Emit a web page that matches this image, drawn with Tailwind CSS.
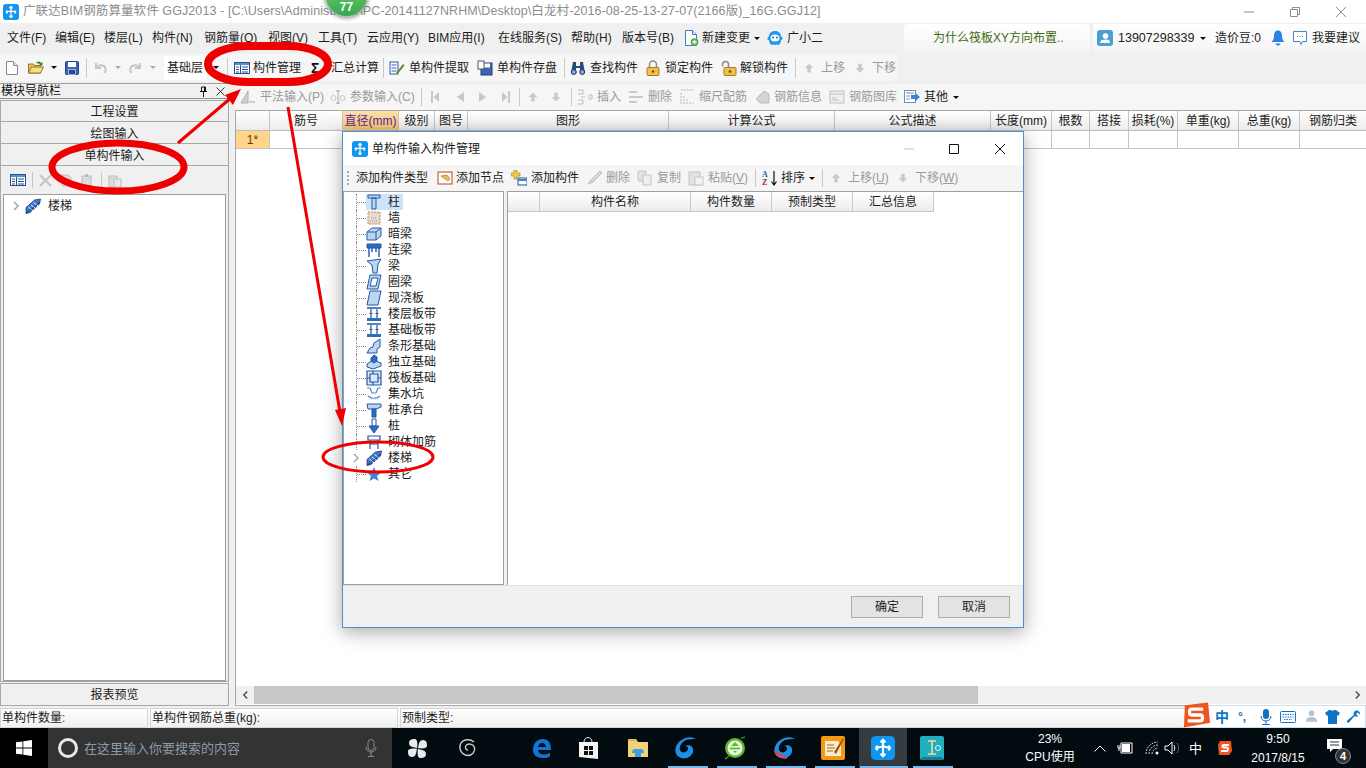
<!DOCTYPE html>
<html lang="zh-CN">
<head>
<meta charset="UTF-8">
<title>广联达BIM钢筋算量软件</title>
<script src="https://cdn.jsdelivr.net/npm/@tailwindcss/browser@4"></script>
</head>
<body class="bg-white">
<svg class="hidden">
  <symbol id="logo" viewBox="0 0 16 16"><rect width="16" height="16" rx="3" fill="#0f96f0"/><path d="M8 2.500v11M3 8c2 0 3-1 5-1s3 1 5 1M6.300 4.200 8 2.500l1.700 1.700M6.300 11.800 8 13.500l1.700-1.700M3 8l1.500-1.500M3 8l1.500 1.500M13 8l-1.500-1.500M13 8l-1.500 1.500" fill="none" stroke="#fff" stroke-width="1.300"/></symbol>
  <symbol id="up" viewBox="0 0 16 16"><path d="M8 3l5 5h-3v5H6V8H3z" fill="#c9c9c9"/></symbol>
  <symbol id="down" viewBox="0 0 16 16"><path d="M8 13l5-5h-3V3H6v5H3z" fill="#c9c9c9"/></symbol>
  <symbol id="table" viewBox="0 0 16 16"><rect x=".5" y="2.500" width="15" height="11" fill="#fff" stroke="#23508f"/><path d="M1 3h14v2H1z" fill="#5d8fc9"/><path d="M6.500 5v8M2 7h3M2 9.500h3M2 12h3M8 7h6M8 9.500h6M8 12h6" stroke="#23508f"/></symbol>
  <symbol id="chev" viewBox="0 0 8 10"><path d="M2 1l4 4-4 4" fill="none" stroke="#a6a6a6" stroke-width="1.500"/></symbol>
  <symbol id="stair" viewBox="0 0 16 16"><path d="M1 9.500 9.500 2 15.500 1 14.500 6 5 14.500 1 15.500z" fill="#3f78c8" stroke="#173f86" stroke-width=".8"/><path d="M3.500 9 8 13M6 7l4.500 3.500M8.500 4.500 13 8" stroke="#fff" stroke-width="1"/><path d="M1 15.500 15 4" stroke="#173f86" stroke-width="1"/></symbol>
</svg>

<div class="relative w-[1366px] h-[768px] overflow-hidden flex flex-col bg-[#f0f0f0] text-[12px] leading-none text-[#1c1c1c] [font-family:'Liberation_Sans','Noto_Sans_CJK_SC',sans-serif]">

  <!-- title bar -->
  <div class="h-[23px] bg-white flex items-center shrink-0">
    <svg class="w-4 h-4 ml-[3px] shrink-0"><use href="#logo"/></svg>
    <span class="ml-[4px] w-[800px] whitespace-nowrap text-[#8c8c8c] text-[12.5px] tracking-[0.09px]">广联达BIM钢筋算量软件 GGJ2013 - [C:\Users\Administrator\PC-20141127NRHM\Desktop\白龙村-2016-08-25-13-27-07(2166版)_16G.GGJ12]</span>
    <svg class="ml-auto w-[10px] h-[10px]" viewBox="0 0 10 10"><path d="M0 5h10" stroke="#8c8c8c"/></svg>
    <svg class="ml-[36px] w-[10px] h-[10px]" viewBox="0 0 10 10"><path d="M.5 2.500h7v7h-7zM2.500 2.500v-2h7v7h-2" fill="none" stroke="#8c8c8c"/></svg>
    <svg class="ml-[36px] mr-[20px] w-[10px] h-[10px]" viewBox="0 0 10 10"><path d="M0 0l10 10M10 0 0 10" stroke="#8c8c8c"/></svg>
  </div>

  <!-- menu bar -->
  <div class="h-[30px] flex items-center shrink-0 whitespace-nowrap">
    <span class="ml-[7px] w-[48px]">文件(F)</span>
    <span class="w-[49px]">编辑(E)</span>
    <span class="w-[48px]">楼层(L)</span>
    <span class="w-[52px]">构件(N)</span>
    <span class="w-[64px]">钢筋量(Q)</span>
    <span class="w-[50px]">视图(V)</span>
    <span class="w-[49px]">工具(T)</span>
    <span class="w-[61px]">云应用(Y)</span>
    <span class="w-[70px]">BIM应用(I)</span>
    <span class="w-[73px]">在线服务(S)</span>
    <span class="w-[51px]">帮助(H)</span>
    <span class="w-[61px]">版本号(B)</span>
    <svg class="w-4 h-4 shrink-0" viewBox="0 0 16 16"><path d="M2.500.5h7l4 4v11h-11z" fill="#fff" stroke="#3d7fc4"/><path d="M9.500.5v4h4" fill="#cfe3f7" stroke="#3d7fc4"/><circle cx="11.500" cy="12" r="3.800" fill="#52a83a"/><path d="M11.500 9.800v4.400M9.300 12h4.400" stroke="#fff" stroke-width="1.400"/></svg>
    <span class="ml-[3px] w-[48px]">新建变更</span>
    <span class="ml-[4px] w-0 h-0 border-x-[3px] border-x-transparent border-t-[3px] border-t-[#111]"></span>
    <svg class="ml-[7px] w-[16px] h-[16px] shrink-0" viewBox="0 0 16 16"><path d="M8 1c4 0 6 2.500 6 5.500 1 .3 1.500 1 1.500 2s-.7 1.600-1.500 1.700c-.5 2.800-1.500 4.800-3 4.800-.8 0-1-.8-1.500-.8s-.8.800-1.500.8-1-.8-1.500-.8-.7.800-1.500.8c-1.500 0-2.500-2-3-4.800C.7 10.100.5 9.500.5 8.500s.5-1.700 1.500-2C2 3.500 4 1 8 1z" fill="#1c9be8"/><ellipse cx="8" cy="8" rx="4.500" ry="3.500" fill="#fff"/><circle cx="6" cy="7.500" r="1" fill="#1c6fb0"/><circle cx="10" cy="7.500" r="1" fill="#1c6fb0"/></svg>
    <span class="ml-[4px] w-[117px]">广小二</span>
    <div class="h-[28px] w-[186px] rounded-t-sm bg-gradient-to-b from-white to-[#f4f4f4] flex items-center shrink-0">
      <span class="ml-[29px] text-[#3f6a10]">为什么筏板XY方向布置..</span>
    </div>
    <div class="ml-[3px] h-[28px] w-[273px] bg-gradient-to-b from-white to-[#f4f4f4] flex items-center shrink-0">
      <svg class="ml-[4px] w-4 h-4 shrink-0" viewBox="0 0 16 16"><rect width="16" height="16" rx="3" fill="#4a9ed6"/><circle cx="8.500" cy="6" r="2.800" fill="#fff"/><path d="M3 13c0-2.500 2-3.500 5.500-3.500S13 10.500 13 13z" fill="#fff"/></svg>
      <span class="ml-[5px] w-[76px] text-[12.500px] text-[#222]">13907298339</span>
      <span class="ml-[6px] w-0 h-0 border-x-[3px] border-x-transparent border-t-[3px] border-t-[#111]"></span>
      <span class="ml-[9px] w-[46px] text-[#222]">造价豆:0</span>
      <svg class="ml-[10px] w-[14px] h-4 shrink-0" viewBox="0 0 14 16"><path d="M7 .5C4 .5 3 3 3 6c0 3-1 4.500-2.500 6h13C12 10.500 11 9 11 6c0-3-1-5.500-4-5.500z" fill="#2b83e8"/><path d="M4.500 13.500h5C9.300 15 8 15.500 7 15.500s-2.300-.5-2.500-2z" fill="#2b83e8"/></svg>
      <svg class="ml-[7px] w-4 h-4 shrink-0" viewBox="0 0 16 16"><path d="M1.500 1.500h13v10h-4l-1.500 3-1-3h-6.500z" fill="#fff" stroke="#3b87d6"/><path d="M5 6.500h1M7.500 6.500h1M10 6.500h1" stroke="#3b87d6"/></svg>
      <span class="ml-[4px]">我要建议</span>
    </div>
  </div>

  <!-- main toolbar -->
  <div class="h-[30px] shrink-0 flex items-start whitespace-nowrap">
    <div class="mt-[1px] w-[897px] h-[27px] bg-[#f6f6f6] rounded-sm flex items-center">
      <svg class="ml-[6px] w-3 h-[14px] shrink-0" viewBox="0 0 12 14"><path d="M.5.5h7l4 4v9H.5z" fill="#fff" stroke="#7f8b9a"/><path d="M7.500.5v4h4" fill="#dfe6ef" stroke="#7f8b9a"/></svg>
      <svg class="ml-[10px] w-4 h-4 shrink-0" viewBox="0 0 16 16"><path d="M.5 4h5l1 1.500h6V13H.5z" fill="#e8c15a" stroke="#9a7420"/><path d="M.5 13l3-6h12l-3 6z" fill="#f6dc85" stroke="#9a7420"/><path d="M8 3c1-2 4-2 5 0l1.500-1v3.500H11l1-1c-1-1-2.500-1-4-1.500z" fill="#3c8a2e"/></svg>
      <span class="ml-[7px] w-0 h-0 border-x-[3px] border-x-transparent border-t-[3px] border-t-[#111]"></span>
      <svg class="ml-[8px] w-[14px] h-[14px] shrink-0" viewBox="0 0 14 14"><rect x=".5" y=".5" width="13" height="13" rx="1" fill="#3a66b5" stroke="#1e3f80"/><rect x="3" y="1" width="8" height="5" fill="#fff"/><rect x="3.500" y="8.500" width="7" height="5" fill="#27498e" stroke="#cfd9ec" stroke-width=".7"/></svg>
      <span class="ml-[7px] w-px h-[20px] bg-[#c8c8c8]"></span>
      <svg class="ml-[8px] w-[12px] h-[12px] shrink-0" viewBox="0 0 12 12"><path d="M1 1v5h5M1.500 6C3 2.500 9 2 10.500 6.500c.5 2 0 3-1 4.500" fill="none" stroke="#c6c6c6" stroke-width="2"/></svg>
      <span class="ml-[8px] w-0 h-0 border-x-[3px] border-x-transparent border-t-[3px] border-t-[#a8a8a8]"></span>
      <svg class="ml-[8px] w-[12px] h-[12px] shrink-0" viewBox="0 0 12 12"><path d="M11 1v5H6M10.500 6C9 2.500 3 2 1.500 6.500c-.5 2 0 3 1 4.500" fill="none" stroke="#c6c6c6" stroke-width="2"/></svg>
      <span class="ml-[9px] w-0 h-0 border-x-[3px] border-x-transparent border-t-[3px] border-t-[#a8a8a8]"></span>
      <div class="ml-[8px] w-[42px] h-[24px] bg-white flex items-center pl-[3px]">基础层</div>
      <span class="ml-[7px] w-0 h-0 border-x-[3px] border-x-transparent border-t-[3px] border-t-[#111]"></span>
      <span class="ml-[8px] w-px h-[20px] bg-[#c8c8c8]"></span>
      <svg class="ml-[6px] w-4 h-4 shrink-0"><use href="#table"/></svg>
      <span class="ml-[3px] w-[48px]">构件管理</span>
      <span class="ml-[10px] w-[10px] font-bold text-[14px] text-[#111]">Σ</span>
      <span class="ml-[10px] w-[46px]">汇总计算</span>
      <span class="ml-[6px] w-px h-[20px] bg-[#c8c8c8]"></span>
      <svg class="ml-[5px] w-4 h-4 shrink-0" viewBox="0 0 16 16"><rect x="1" y="2" width="8" height="12" fill="#fff" stroke="#2d5ca8"/><path d="M2.500 5h5M2.500 8h5M2.500 11h5" stroke="#2d5ca8"/><path d="M7 13l7-9 1.500 1.500-7 8.500z" fill="#5b8a2f"/></svg>
      <span class="ml-[4px] w-[60px]">单构件提取</span>
      <svg class="ml-[8px] w-4 h-4 shrink-0" viewBox="0 0 16 16"><rect x="4" y="3" width="11" height="12" fill="#3a66b5" stroke="#1e3f80"/><rect x="6" y="3.500" width="7" height="4" fill="#fff"/><rect x="1" y="1" width="6" height="8" fill="#fff" stroke="#555"/></svg>
      <span class="ml-[4px] w-[60px]">单构件存盘</span>
      <span class="ml-[7px] w-px h-[20px] bg-[#c8c8c8]"></span>
      <svg class="ml-[5px] w-4 h-4 shrink-0" viewBox="0 0 16 16"><path d="M3 2h3v4h4V2h3l2 11H10V8H6v5H1z" fill="#27497f"/><circle cx="3.800" cy="12" r="2.500" fill="#7fa6d8" stroke="#1d3763"/><circle cx="12.200" cy="12" r="2.500" fill="#7fa6d8" stroke="#1d3763"/></svg>
      <span class="ml-[4px] w-[48px]">查找构件</span>
      <svg class="ml-[8px] w-[14px] h-4 shrink-0" viewBox="0 0 14 16"><path d="M3.500 8V4.500a3.500 3.500 0 0 1 7 0V8" fill="none" stroke="#8d8d8d" stroke-width="1.500"/><rect x="1" y="7.500" width="12" height="8" rx="1" fill="#efc04e" stroke="#a67c1d"/><circle cx="7" cy="11.500" r="1.300" fill="#6a4c08"/></svg>
      <span class="ml-[5px] w-[48px]">锁定构件</span>
      <svg class="ml-[8px] w-4 h-4 shrink-0" viewBox="0 0 16 16"><path d="M1.500 6.500V4.500a3 3 0 0 1 6 0V8" fill="none" stroke="#8d8d8d" stroke-width="1.500"/><rect x="3" y="7.500" width="12" height="8" rx="1" fill="#efc04e" stroke="#a67c1d"/><circle cx="9" cy="11.500" r="1.300" fill="#6a4c08"/></svg>
      <span class="ml-[3px] w-[48px]">解锁构件</span>
      <span class="ml-[7px] w-px h-[20px] bg-[#c8c8c8]"></span>
      <svg class="ml-[6px] w-[14px] h-[14px] shrink-0"><use href="#up"/></svg>
      <span class="ml-[5px] w-[24px] text-[#9a9a9a]">上移</span>
      <svg class="ml-[8px] w-[14px] h-[14px] shrink-0"><use href="#down"/></svg>
      <span class="ml-[5px] w-[24px] text-[#9a9a9a]">下移</span>
    </div>
  </div>

  <!-- work area -->
  <div class="h-[623px] shrink-0 flex">
    <!-- module nav -->
    <div class="w-[229px] shrink-0 flex flex-col border-t border-[#a0a0a0]">
      <div class="h-[15px] shrink-0 flex items-center border-b border-[#8c8c8c] whitespace-nowrap">
        <span class="ml-[1px] text-[#111]">模块导航栏</span>
        <svg class="ml-auto w-[9px] h-[11px]" viewBox="0 0 9 11"><path d="M2.500 1h4v4.500h-4zM1 5.500h7M4.500 5.500V11M5.500 1v4.500" fill="none" stroke="#111"/></svg>
        <svg class="ml-[8px] mr-[4px] w-[9px] h-[9px]" viewBox="0 0 9 9"><path d="M.5.5l8 8M8.500.5l-8 8" stroke="#333"/></svg>
      </div>
      <div class="mt-[1px] h-[22px] pt-[2px] shrink-0 flex items-center justify-center bg-[#f0f0f0] border border-[#a8a8a8]">工程设置</div>
      <div class="h-[22px] pt-[2px] shrink-0 flex items-center justify-center bg-[#f0f0f0] border border-t-0 border-[#a8a8a8]">绘图输入</div>
      <div class="h-[22px] pt-[2px] shrink-0 flex items-center justify-center bg-[#f0f0f0] border border-t-0 border-[#a8a8a8]">单构件输入</div>
      <div class="flex-1 flex flex-col border border-t-0 border-[#a8a8a8] px-[2px]">
        <div class="h-[28px] shrink-0 flex items-center">
          <svg class="ml-[7px] w-4 h-4 shrink-0"><use href="#table"/></svg>
          <span class="ml-[6px] w-px h-[16px] bg-[#c8c8c8]"></span>
          <svg class="ml-[6px] w-[13px] h-[13px]" viewBox="0 0 13 13"><path d="M1 1l11 11M12 1 1 12" stroke="#c4c4c4" stroke-width="2"/></svg>
          <svg class="ml-[8px] w-[13px] h-[13px]" viewBox="0 0 13 13"><path d="M2 1h6l3 3v8H2z" fill="#dcdcdc" stroke="#c0c0c0"/></svg>
          <svg class="ml-[7px] w-[15px] h-[15px]" viewBox="0 0 15 15"><path d="M2 3h9v11H2z" fill="#dcdcdc" stroke="#bcbcbc"/><path d="M5 1h3v3H5z" fill="#bcbcbc"/></svg>
          <span class="ml-[6px] w-px h-[16px] bg-[#c8c8c8]"></span>
          <svg class="ml-[5px] w-[15px] h-[15px]" viewBox="0 0 15 15"><path d="M2 3h8v11H2z" fill="#dcdcdc" stroke="#bcbcbc"/><path d="M7 6h7v8H7z" fill="#e8e8e8" stroke="#bcbcbc"/></svg>
        </div>
        <div class="flex-1 bg-white border border-[#9c9c9c] pt-[1px]">
          <div class="h-[16px] mt-[2px] flex items-center">
            <svg class="ml-[8px] w-[8px] h-[10px]"><use href="#chev"/></svg>
            <svg class="ml-[5px] w-4 h-4 shrink-0"><use href="#stair"/></svg>
            <span class="ml-[7px]">楼梯</span>
          </div>
        </div>
      </div>
      <div class="mt-[1px] h-[23px] shrink-0 flex items-center justify-center bg-[#f0f0f0] border border-[#a8a8a8]">报表预览</div>
    </div>

    <!-- detail grid -->
    <div class="ml-[6px] flex-1 flex flex-col min-w-0">
      <div class="mt-[1px] h-[26px] shrink-0 flex items-center bg-[#f6f6f6] whitespace-nowrap text-[#9a9a9a]">
        <svg class="ml-[5px] w-4 h-4 shrink-0" viewBox="0 0 16 16"><path d="M1 14L8 2v12z" fill="#d0d0d0" stroke="#b0b0b0"/><path d="M9 14h6v-2H9z" fill="#d0d0d0"/></svg>
        <span class="ml-[4px] w-[63px]">平法输入(P)</span>
        <svg class="ml-[7px] w-4 h-4 shrink-0" viewBox="0 0 16 16"><path d="M8 1v14M6 2h4M6 14h4" stroke="#aaa"/><circle cx="3.500" cy="9" r="2.500" fill="none" stroke="#c4c4c4"/><circle cx="12.500" cy="9" r="2.500" fill="none" stroke="#c4c4c4"/></svg>
        <span class="ml-[4px] w-[63px]">参数输入(C)</span>
        <span class="ml-[8px] w-px h-[18px] bg-[#c8c8c8]"></span>
        <svg class="ml-[8px] w-[10px] h-[12px]" viewBox="0 0 10 12"><path d="M1 0h2v12H1zM9 1v10L3.500 6z" fill="#c8c8c8"/></svg>
        <svg class="ml-[15px] w-[10px] h-[12px]" viewBox="0 0 10 12"><path d="M9 1v10L2 6z" fill="#c8c8c8"/></svg>
        <svg class="ml-[13px] w-[10px] h-[12px]" viewBox="0 0 10 12"><path d="M1 1v10l7-5z" fill="#c8c8c8"/></svg>
        <svg class="ml-[13px] w-[10px] h-[12px]" viewBox="0 0 10 12"><path d="M7 0h2v12H7zM1 1v10l5.500-5z" fill="#c8c8c8"/></svg>
        <span class="ml-[8px] w-px h-[18px] bg-[#c8c8c8]"></span>
        <svg class="ml-[6px] w-[14px] h-[14px] shrink-0"><use href="#up"/></svg>
        <svg class="ml-[9px] w-[14px] h-[14px] shrink-0"><use href="#down"/></svg>
        <span class="ml-[8px] w-px h-[18px] bg-[#c8c8c8]"></span>
        <svg class="ml-[5px] w-4 h-4 shrink-0" viewBox="0 0 16 16"><path d="M1 1h5v4H1M1 11h5v4H1M4 8h4M12 6h3v4h-3z" fill="none" stroke="#bdbdbd"/></svg>
        <span class="ml-[4px] w-[24px]">插入</span>
        <svg class="ml-[7px] w-4 h-4 shrink-0" viewBox="0 0 16 16"><path d="M1 3h8M1 8h10M1 13h8" stroke="#bdbdbd" stroke-width="1.500"/><path d="M11 8h4" stroke="#9a9a9a"/></svg>
        <span class="ml-[4px] w-[24px]">删除</span>
        <svg class="ml-[8px] w-[15px] h-4 shrink-0" viewBox="0 0 15 16"><path d="M1 15V3M4 15V6M7 15V9M10 15v-3M13 15v-1M1 1h13" stroke="#b8b8b8" stroke-dasharray="2 1"/></svg>
        <span class="ml-[4px] w-[48px]">缩尺配筋</span>
        <svg class="ml-[8px] w-4 h-4 shrink-0" viewBox="0 0 16 16"><path d="M1 10L9 2l5 3v9H5z" fill="#d4d4d4" stroke="#bcbcbc"/></svg>
        <span class="ml-[3px] w-[48px]">钢筋信息</span>
        <svg class="ml-[7px] w-4 h-4 shrink-0" viewBox="0 0 16 16"><rect x="1" y="2" width="14" height="12" fill="#efefef" stroke="#c0c0c0"/><path d="M1 5h14M3 9h4M3 11h7" stroke="#c0c0c0"/></svg>
        <span class="ml-[4px] w-[48px]">钢筋图库</span>
        <svg class="ml-[7px] w-4 h-4 shrink-0" viewBox="0 0 16 16"><rect x=".5" y="1.500" width="11" height="12" fill="#fff" stroke="#7b8ea8"/><path d="M2 4h8M2 7h4M2 10h4" stroke="#7b8ea8"/><path d="M7 6h4V3.500l5 4.500-5 4.500V10H7z" fill="#3d83d6"/></svg>
        <span class="ml-[4px] w-[24px] text-[#1c1c1c]">其他</span>
        <span class="ml-[5px] w-0 h-0 border-x-[3px] border-x-transparent border-t-[3px] border-t-[#111]"></span>
      </div>
      <div class="flex-1 flex flex-col bg-white border-t border-l border-b border-[#a8a8a8] min-h-0">
        <div class="h-[20px] shrink-0 flex bg-gradient-to-b from-white to-[#ececec] border-b border-[#bdbdbd] whitespace-nowrap">
          <div class="w-[34px] border-r border-[#c4c4c4]"></div>
          <div class="w-[73px] border-r border-[#c4c4c4] flex items-center justify-center">筋号</div>
          <div class="w-[56px] border-r border-[#c4c4c4] flex items-center justify-center bg-gradient-to-b from-[#fde0a8] to-[#f6c574] text-[#5e1f9a]">直径(mm)</div>
          <div class="w-[36px] border-r border-[#c4c4c4] flex items-center justify-center">级别</div>
          <div class="w-[33px] border-r border-[#c4c4c4] flex items-center justify-center">图号</div>
          <div class="w-[201px] border-r border-[#c4c4c4] flex items-center justify-center">图形</div>
          <div class="w-[166px] border-r border-[#c4c4c4] flex items-center justify-center">计算公式</div>
          <div class="w-[156px] border-r border-[#c4c4c4] flex items-center justify-center">公式描述</div>
          <div class="w-[61px] border-r border-[#c4c4c4] flex items-center justify-center">长度(mm)</div>
          <div class="w-[38px] border-r border-[#c4c4c4] flex items-center justify-center">根数</div>
          <div class="w-[39px] border-r border-[#c4c4c4] flex items-center justify-center">搭接</div>
          <div class="w-[49px] border-r border-[#c4c4c4] flex items-center justify-center">损耗(%)</div>
          <div class="w-[61px] border-r border-[#c4c4c4] flex items-center justify-center">单重(kg)</div>
          <div class="w-[61px] border-r border-[#c4c4c4] flex items-center justify-center">总重(kg)</div>
          <div class="flex-1 flex items-center justify-center">钢筋归类</div>
        </div>
        <div class="h-[18px] shrink-0 flex border-b border-[#c4c4c4]">
          <div class="w-[34px] bg-[#ffd58c] border-r border-[#c4c4c4] flex items-center justify-center text-[#6b3a00]">1*</div>
          <div class="w-[73px] border-r border-[#c4c4c4]"></div>
          <div class="w-[56px] border-r border-[#c4c4c4]"></div>
          <div class="w-[36px] border-r border-[#c4c4c4]"></div>
          <div class="w-[33px] border-r border-[#c4c4c4]"></div>
          <div class="w-[201px] border-r border-[#c4c4c4]"></div>
          <div class="w-[166px] border-r border-[#c4c4c4]"></div>
          <div class="w-[156px] border-r border-[#c4c4c4]"></div>
          <div class="w-[61px] border-r border-[#c4c4c4]"></div>
          <div class="w-[38px] border-r border-[#c4c4c4]"></div>
          <div class="w-[39px] border-r border-[#c4c4c4]"></div>
          <div class="w-[49px] border-r border-[#c4c4c4]"></div>
          <div class="w-[61px] border-r border-[#c4c4c4]"></div>
          <div class="w-[61px] border-r border-[#c4c4c4]"></div>
        </div>
        <div class="flex-1"></div>
        <div class="h-[18px] mb-[1px] shrink-0 flex items-stretch bg-[#f0f0f0]">
          <div class="w-[18px] flex items-center justify-center"><svg class="w-[7px] h-[10px] rotate-180" viewBox="0 0 8 10"><path d="M2 1l4 4-4 4" fill="none" stroke="#444" stroke-width="1.500"/></svg></div>
          <div class="w-[724px] bg-[#c8c8c8]"></div>
          <div class="flex-1"></div>
          <div class="w-[18px] flex items-center justify-center"><svg class="w-[7px] h-[10px]" viewBox="0 0 8 10"><path d="M2 1l4 4-4 4" fill="none" stroke="#444" stroke-width="1.500"/></svg></div>
        </div>
      </div>
    </div>
  </div>

  <!-- status bar -->
  <div class="mt-[2px] h-[20px] shrink-0 flex bg-gradient-to-b from-white to-[#f0f0f0] whitespace-nowrap">
    <div class="w-[148px] border border-[#d4d4d4] flex items-center pl-[1px]">单构件数量:</div>
    <div class="ml-[2px] w-[248px] border border-[#d4d4d4] flex items-center pl-[1px]">单构件钢筋总重(kg):</div>
    <div class="ml-[2px] flex-1 border border-[#d4d4d4] flex items-center pl-[1px]">预制类型:</div>
  </div>

  <!-- taskbar -->
  <div class="h-[40px] shrink-0 flex items-center bg-[#020b10] text-white">
    <div class="w-[48px] h-full bg-black flex items-center justify-center">
      <svg class="w-4 h-4" viewBox="0 0 16 16"><path d="M0 2.300l6.500-.9v6.200H0zM7.300 1.300 16 0v7.600H7.300zM0 8.400h6.500v6.200L0 13.700zM7.300 8.400H16V16l-8.700-1.200z" fill="#fff"/></svg>
    </div>
    <div class="w-[344px] h-full bg-[#333333] flex items-center">
      <span class="ml-[10px] w-[20px] h-[20px] rounded-full border-[3px] border-[#e8e8e8]"></span>
      <span class="ml-[6px] text-[13px] text-[#8d99a6] whitespace-nowrap">在这里输入你要搜索的内容</span>
      <svg class="ml-auto mr-[15px] w-[12px] h-[18px]" viewBox="0 0 12 18"><rect x="3" y=".5" width="6" height="11" rx="3" fill="none" stroke="#8a8a8a"/><path d="M1 8c0 3 2 5 5 5s5-2 5-5M6 13v4M3 17.500h6" fill="none" stroke="#8a8a8a"/></svg>
    </div>
    <svg class="ml-[15px] w-[21px] h-[21px]" viewBox="0 0 21 21"><path d="M10 10C6 9 2 9 2 5s4-4 6-4 3 4 2 9zM11 10c1-4 1-8 5-8s4 4 4 6-4 3-9 2zM11 11c4 1 8 1 8 5s-4 4-6 4-3-4-2-9zM10 11c-1 4-1 8-5 8s-4-4-4-6 4-3 9-2z" fill="#e8eaeb"/></svg>
    <svg class="ml-[30px] w-[20px] h-[20px]" viewBox="0 0 20 20"><path d="M16 4C12 .5 5 1 2.500 6c-2 5 1 11 7 11.500 5 0 8-4 7-8-1-3-5-4.500-8-2.500-2 2-1 5 1.500 5" fill="none" stroke="#c9c9c9" stroke-width="1.400"/></svg>
    <svg class="ml-[54px] w-[20px] h-[21px]" viewBox="0 0 20 21"><path d="M1 12C1 5 5 1 11 1c5 0 8 4 8 10v1H6c.5 3 3 4.500 6 4.500 2 0 4-.5 6-2v4c-2 1-4 1.500-7 1.500C5 20 1 17 1 12zm5-3h8c0-2-1.500-4-4-4-2 0-3.500 2-4 4z" fill="#0a78d6"/></svg>
    <svg class="ml-[26px] w-[21px] h-[24px]" viewBox="0 0 21 24"><path d="M6 6c0-6 8-6 8 0" fill="none" stroke="#e6e6e6"/><path d="M1 6l19 0 0 17-19-2z" fill="#f4f4f4"/><path d="M6 10h4v4H6zM11 10h4v4h-4zM6 15h4v4H6zM11 15h4v4h-4z" fill="#111"/></svg>
    <svg class="ml-[28px] w-[22px] h-[20px]" viewBox="0 0 22 20"><path d="M1 1h8l2 3h10v15H1z" fill="#f0d27a"/><path d="M1 1h8l1 2H1z" fill="#e4b94a"/><path d="M5 15c0-2 1-4 3-4h6c2 0 3 2 3 4h-3v4H8v-4z" fill="#3aa0e0"/></svg>
    <svg class="ml-[24px] w-[24px] h-[24px]" viewBox="0 0 24 24"><path d="M23 3c-5-3-11-2-16 2C1 10 1 18 6 21c5 3 12 1 14-5 1-5-3-8-8-6 3 0 4 3 2 5-2 2-6 2-7-1-1-4 2-8 6-10 3-1 7-1 10-1z" fill="#1d8fe6"/></svg>
    <svg class="ml-[26px] w-[24px] h-[26px]" viewBox="0 0 24 26"><circle cx="12" cy="13" r="10" fill="#5cbc2c"/><circle cx="12" cy="13" r="7.500" fill="#e8f6df"/><path d="M7 13.500h10" stroke="#5cbc2c" stroke-width="1.800"/><path d="M12 7l-4 4h8z" fill="#5cbc2c"/><path d="M14 16h-4l2 2z" fill="#5cbc2c"/><path d="M2 24c2-1 3-2 4-3M18 3c2 0 3-1 4-1" stroke="#3a8f1a" stroke-width="1.500"/></svg>
    <svg class="ml-[25px] w-[24px] h-[24px]" viewBox="0 0 24 24"><path d="M23 3c-5-3-11-2-16 2C1 10 1 18 6 21c5 3 12 1 14-5 1-5-3-8-8-6 3 0 4 3 2 5-2 2-6 2-7-1-1-4 2-8 6-10 3-1 7-1 10-1z" fill="#1d8fe6"/><path d="M2 14l14 8-3 1-9-4z" fill="#e4434f"/></svg>
    <svg class="ml-[25px] w-[24px] h-[24px]" viewBox="0 0 24 24"><rect width="24" height="24" rx="2" fill="#f39a12"/><path d="M4 5h13l3 4v11H4z" fill="#f9eecb"/><path d="M6 9h7M6 12h8M6 15h6" stroke="#9a6a1a"/><path d="M13 16L22 2l1 1-8 15z" fill="#b4461c"/></svg>
    <div class="ml-[14px] w-[48px] h-full bg-[#353b3e] flex items-center justify-center">
      <svg class="w-6 h-6"><use href="#logo"/></svg>
    </div>
    <svg class="ml-[13px] w-[24px] h-[24px]" viewBox="0 0 24 24"><rect width="24" height="24" rx="2" fill="#23aebf"/><path d="M8 5h8M8 18h8M12 5v13" stroke="#efdca0" stroke-width="1.600"/><circle cx="18" cy="12" r="2.500" fill="none" stroke="#e7f5f7"/><path d="M2 21h20v3H2z" fill="#168090"/></svg>

    <div class="ml-[71px] w-[70px] flex flex-col items-center gap-[6px] text-[12px] whitespace-nowrap"><span>23%</span><span>CPU使用</span></div>
    <svg class="ml-[9px] w-[12px] h-[7px]" viewBox="0 0 12 7"><path d="M.5 6.500 6 1l5.500 5.500" fill="none" stroke="#fff"/></svg>
    <svg class="ml-[11px] w-[16px] h-[12px]" viewBox="0 0 16 12"><path d="M4 1h11v10H4z" fill="none" stroke="#fff"/><rect x="5" y="2" width="8" height="8" fill="#fff"/><path d="M1 3v3h2V3M2 6v3" stroke="#fff"/></svg>
    <svg class="ml-[12px] w-[14px] h-[14px]" viewBox="0 0 14 14"><path d="M1 13c0-6 5-12 12-12M4 13c0-5 4-9 9-9M7 13c0-3 3-6 6-6" fill="none" stroke="#cfcfcf" stroke-dasharray="2 1"/><circle cx="12" cy="12" r="1.500" fill="#fff"/></svg>
    <svg class="ml-[5px] w-[16px] h-[14px]" viewBox="0 0 16 14"><path d="M1 5h3l4-4v12L4 9H1z" fill="none" stroke="#fff"/><path d="M10 4c1 2 1 4 0 6" fill="none" stroke="#fff"/><path d="M13 2c2 3 2 7 0 10" fill="none" stroke="#666"/></svg>
    <span class="ml-[9px] w-[14px] text-[13px]">中</span>
    <svg class="ml-[14px] w-[16px] h-[16px]" viewBox="0 0 16 16"><path d="M3 1h11l1 10-3 4H2L1 5z" fill="#f0561d"/><path d="M12 5H6.500C5 5 5 7.500 6.500 7.500h3c2 0 2 3.500 0 3.500H4" fill="none" stroke="#fff" stroke-width="1.800"/></svg>
    <div class="ml-[14px] w-[62px] flex flex-col items-center gap-[7px] text-[12px] whitespace-nowrap"><span>9:50</span><span>2017/8/15</span></div>
    <div class="ml-[18px] relative w-[15px] h-[14px] -mt-[4px]">
      <svg class="w-[15px] h-[14px]" viewBox="0 0 15 14"><path d="M0 0h15v10H6l-3 3v-3H0z" fill="#fff"/><path d="M3 3h9M3 6h9" stroke="#333"/></svg>
      <span class="absolute left-[8px] top-[9px] w-[16px] h-[16px] rounded-full bg-[#333] border border-[#888] flex items-center justify-center text-[11px] font-bold">4</span>
    </div>
  </div>

  <!-- running task underlines -->
  <div class="absolute left-[668px] bottom-0 w-[40px] h-[2px] bg-[#76b9ed]"></div>
  <div class="absolute left-[717px] bottom-0 w-[40px] h-[2px] bg-[#76b9ed]"></div>
  <div class="absolute left-[766px] bottom-0 w-[40px] h-[2px] bg-[#76b9ed]"></div>
  <div class="absolute left-[815px] bottom-0 w-[40px] h-[2px] bg-[#76b9ed]"></div>
  <div class="absolute left-[860px] bottom-0 w-[48px] h-[2px] bg-[#76b9ed]"></div>
  <div class="absolute left-[913px] bottom-0 w-[40px] h-[2px] bg-[#76b9ed]"></div>

  <!-- component manager dialog -->
  <div class="absolute left-[342px] top-[131px] w-[682px] h-[497px] flex flex-col bg-white border border-[#4a90d9] shadow-[0_4px_18px_rgba(0,0,0,0.35)]">
    <div class="h-[33px] shrink-0 flex items-center">
      <svg class="ml-[9px] w-4 h-4 shrink-0"><use href="#logo"/></svg>
      <span class="ml-[4px]">单构件输入构件管理</span>
      <svg class="ml-auto w-[10px] h-[10px]" viewBox="0 0 10 10"><path d="M0 5h10" stroke="#c4c4c4"/></svg>
      <svg class="ml-[35px] w-[10px] h-[10px]" viewBox="0 0 10 10"><path d="M.5.5h9v9h-9z" fill="none" stroke="#111"/></svg>
      <svg class="ml-[36px] mr-[18px] w-[10px] h-[10px]" viewBox="0 0 10 10"><path d="M0 0l10 10M10 0 0 10" stroke="#111"/></svg>
    </div>
    <div class="h-[26px] shrink-0 flex items-center bg-[#f5f5f5] whitespace-nowrap">
      <span class="ml-[4px] w-[2px] h-[14px] border-l-2 border-dotted border-[#aaa]"></span>
      <span class="ml-[7px] w-[72px]">添加构件类型</span>
      <svg class="ml-[9px] w-4 h-4 shrink-0" viewBox="0 0 16 16"><rect x="1" y="2" width="14" height="12" fill="#fff" stroke="#c8401c"/><path d="M4 6l7 5 2-2-3-4z" fill="#e4bf62" stroke="#a07a20" stroke-width=".7"/></svg>
      <span class="ml-[3px] w-[48px]">添加节点</span>
      <svg class="ml-[7px] w-4 h-4 shrink-0" viewBox="0 0 16 16"><path d="M3 0h3v3h3v3H6v3H3V6H0V3h3z" fill="#eccb4d" stroke="#a58317" stroke-width=".6"/><rect x="7" y="8" width="9" height="7" fill="#fff" stroke="#23508f"/><path d="M7 9h9v2H7z" fill="#4e82c0"/></svg>
      <span class="ml-[4px] w-[48px]">添加构件</span>
      <svg class="ml-[8px] w-4 h-4 shrink-0" viewBox="0 0 16 16"><path d="M1 14l5-2 9-9-2-2-9 9z" fill="#d8d8d8" stroke="#bcbcbc"/></svg>
      <span class="ml-[3px] w-[24px] text-[#9a9a9a]">删除</span>
      <svg class="ml-[7px] w-4 h-4 shrink-0" viewBox="0 0 16 16"><path d="M1 1h8v10H1z" fill="#e2e2e2" stroke="#c4c4c4"/><path d="M6 5h8v10H6z" fill="#efefef" stroke="#c4c4c4"/></svg>
      <span class="ml-[4px] w-[24px] text-[#9a9a9a]">复制</span>
      <svg class="ml-[7px] w-4 h-4 shrink-0" viewBox="0 0 16 16"><rect x="1" y="2" width="11" height="13" fill="#e2e2e2" stroke="#c4c4c4"/><rect x="7" y="7" width="8" height="8" fill="#f2f2f2" stroke="#c4c4c4"/></svg>
      <span class="ml-[4px] w-[41px] text-[#9a9a9a]">粘贴(<span class="underline">V</span>)</span>
      <span class="ml-[6px] w-px h-[18px] bg-[#c8c8c8]"></span>
      <svg class="ml-[5px] w-[17px] h-4 shrink-0" viewBox="0 0 17 16"><text x="1" y="7" font-size="8" font-weight="700" font-family="Liberation Serif" fill="#2c5aa8">A</text><text x="1" y="15" font-size="8" font-weight="700" font-family="Liberation Serif" fill="#a02c2c">Z</text><path d="M13 1v13M10.500 11.500 13 15l2.500-3.500" fill="none" stroke="#111" stroke-width="1.200"/></svg>
      <span class="ml-[3px] w-[24px]">排序</span>
      <span class="ml-[4px] w-0 h-0 border-x-[3px] border-x-transparent border-t-[3px] border-t-[#111]"></span>
      <span class="ml-[7px] w-px h-[18px] bg-[#c8c8c8]"></span>
      <svg class="ml-[6px] w-[14px] h-[14px] shrink-0"><use href="#up"/></svg>
      <span class="ml-[5px] w-[42px] text-[#9a9a9a]">上移(<span class="underline">U</span>)</span>
      <svg class="ml-[6px] w-[14px] h-[14px] shrink-0"><use href="#down"/></svg>
      <span class="ml-[5px] text-[#9a9a9a]">下移(<span class="underline">W</span>)</span>
    </div>
    <div class="h-[395px] shrink-0 flex bg-[#f0f0f0] border-b border-[#e0e0e0]">
      <div id="tree" class="w-[161px] bg-white border border-[#a0a0a0] pt-[2px]"></div>
      <div class="ml-[3px] flex-1 bg-white border-t border-l border-[#a0a0a0]">
        <div class="h-[20px] flex whitespace-nowrap">
          <div class="w-[32px] border-r border-b border-[#c8c8c8] bg-gradient-to-b from-white to-[#ececec]"></div>
          <div class="w-[151px] border-r border-b border-[#c8c8c8] bg-gradient-to-b from-white to-[#ececec] flex items-center justify-center">构件名称</div>
          <div class="w-[81px] border-r border-b border-[#c8c8c8] bg-gradient-to-b from-white to-[#ececec] flex items-center justify-center">构件数量</div>
          <div class="w-[81px] border-r border-b border-[#c8c8c8] bg-gradient-to-b from-white to-[#ececec] flex items-center justify-center">预制类型</div>
          <div class="w-[81px] border-r border-b border-[#c8c8c8] bg-gradient-to-b from-white to-[#ececec] flex items-center justify-center">汇总信息</div>
        </div>
      </div>
    </div>
    <div class="flex-1 bg-[#f0f0f0] flex items-center justify-end">
      <button class="w-[72px] h-[22px] pt-[1px] bg-[#e3e3e3] border border-[#adadad] text-[12px]">确定</button>
      <button class="ml-[15px] mr-[13px] w-[72px] h-[22px] pt-[1px] bg-[#e3e3e3] border border-[#adadad] text-[12px]">取消</button>
    </div>
  </div>

  <!-- floating notification badge -->
  <div class="absolute left-[325px] -top-[26px] w-[43px] h-[43px] rounded-full bg-gradient-to-b from-[#7fd463] to-[#34a853] border border-[#9dbb9d] shadow-[0_1px_4px_rgba(0,0,0,0.5)] flex items-end justify-center pb-[3px] text-white font-bold text-[12px]">77</div>

  <!-- Sogou IME bar -->
  <div class="absolute left-[1181px] top-[702px] w-[185px] h-[26px] flex items-end">
    <div class="w-full h-[23px] ml-[4px] bg-white border border-[#cfdff0] flex items-center">
      <span class="ml-[29px] w-[14px] text-[14px] font-bold text-[#1273c4]">中</span>
      <span class="ml-[9px] w-[11px] text-[12px] font-bold text-[#1273c4]">°,</span>
      <svg class="ml-[11px] w-[12px] h-[16px]" viewBox="0 0 12 16"><rect x="3" y="0" width="6" height="10" rx="3" fill="#1273c4"/><path d="M1 7c0 3 2 5 5 5s5-2 5-5M6 12v3M2 15.500h8" fill="none" stroke="#1273c4"/></svg>
      <svg class="ml-[8px] w-[16px] h-[12px]" viewBox="0 0 16 12"><rect x=".5" y=".5" width="15" height="11" rx="1" fill="#fff" stroke="#1273c4"/><path d="M2.500 3.500h11M2.500 6h11M4 8.500h8" stroke="#1273c4" stroke-dasharray="1.500 1"/></svg>
      <svg class="ml-[9px] w-[15px] h-[15px]" viewBox="0 0 16 15"><circle cx="7" cy="4" r="3" fill="#b4c3d2"/><path d="M1 13c0-4 3-5 6-5s6 1 6 5z" fill="#b4c3d2"/></svg>
      <svg class="ml-[5px] w-[15px] h-[14px]" viewBox="0 0 15 14"><path d="M4 0h2c.5 1 2.500 1 3 0h2l4 3-2 3-1-.7V14H3V5.300L2 6 0 3z" fill="#1273c4"/></svg>
      <svg class="ml-[7px] w-[14px] h-[14px]" viewBox="0 0 14 14"><path d="M9 .5c2-.5 4 1 4 3 0 .5 0 .5-.2 1L10.500 2.500 9 4l2 2.300c-1.500.7-3 .2-3.500-.3L2 12.500c-1 1-3-.7-1.800-2L6.800 5C6.300 3 7 1 9 .5z" fill="#1273c4"/></svg>
    </div>
    <svg class="absolute left-0 top-0 w-[29px] h-[26px]" viewBox="0 0 30 26"><path d="M4 3 28 0l2 21-27 5z" fill="#f0541c"/><path d="M23 7H11c-3 0-3 6 0 6h9c3 0 3 6 0 6H7" fill="none" stroke="#fff" stroke-width="3.400"/></svg>
  </div>

  <!-- red markup drawn on the screenshot -->
  <svg class="absolute inset-0 w-[1366px] h-[768px] pointer-events-none" viewBox="0 0 1366 768">
    <rect x="208" y="46" width="120" height="36" rx="40" ry="18" fill="none" stroke="#ee0000" stroke-width="8"/>
    <ellipse cx="118" cy="167" rx="66" ry="24" fill="none" stroke="#ee0000" stroke-width="7"/>
    <ellipse cx="378" cy="457" rx="55" ry="15" fill="none" stroke="#ee0000" stroke-width="3"/>
    <path d="M178 143 232 97" stroke="#ee0000" stroke-width="3"/>
    <path d="M241 89 225 95 233 105z" fill="#ee0000"/>
    <path d="M288 107 340 412" stroke="#ee0000" stroke-width="3"/>
    <path d="M342 426 335 410 346 408z" fill="#ee0000"/>
  </svg>
</div>

<script>
  // component type tree in the dialog
  var s = 'stroke="#1f58a8" fill="#bcd6f2"';
  var band = '<path d="M1 2h14" stroke="#1f58a8" stroke-width="1.500"/><path d="M5 3v9M11 3v9M3.500 7.500h3M9.500 7.500h3" stroke="#1f58a8" stroke-width="1.200"/><path d="M1 12h14v3H1z" fill="#2e6cc0"/>';
  var types = [
    ['柱', '<path d="M2 1h12v3H2zM6 4h4v11H6z" ' + s + '/>'],
    ['墙', '<rect x="2" y="2" width="12" height="12" fill="#e4dcd2" stroke="#d8843c" stroke-dasharray="2 1"/><path d="M4 11h8M5 8h6" stroke="#999" stroke-dasharray="1 1"/>'],
    ['暗梁', '<path d="M1 6l5-4h9v8l-5 4H1z" ' + s + '/><path d="M1 6h9v8M10 6l5-4" ' + s + '/>'],
    ['连梁', '<path d="M1 2h14v4H1z" fill="#2e6cc0" stroke="#1f58a8"/><path d="M3 6v9M13 6v9M6 6v4M10 6v4" stroke="#1f58a8" stroke-width="1.400"/>'],
    ['梁', '<path d="M1 3l14-2-3 5-1 9H7L6 7z" ' + s + '/>'],
    ['圈梁', '<path d="M4 1h11l-3 14H1z" ' + s + '/><path d="M6 4h6l-2 8H4z" fill="#fff" stroke="#1f58a8"/>'],
    ['现浇板', '<path d="M4 1h11l-3 14H1z" ' + s + '/>'],
    ['楼层板带', band],
    ['基础板带', band],
    ['条形基础', '<path d="M1 15l3-5 3-1 1-4 6-4v8l-3 2v4z" ' + s + '/>'],
    ['独立基础', '<path d="M1 10l6-4 8 3v3l-8 3-6-2z" ' + s + '/><path d="M5 4l3-3 3 2v4l-3 2-3-2z" fill="#2e6cc0" stroke="#1f58a8"/>'],
    ['筏板基础', '<path d="M1 1h14v14H1zM4 4h8v8H4zM7 1v3M7 12v3M1 8h3M12 8h3" fill="#dbe8f7" stroke="#1f58a8" stroke-width="1.200"/>'],
    ['集水坑', '<path d="M1 2h3l2 5h4l2-5h3M2 10c3 3 9 3 12 0" fill="none" stroke="#4f86cc" stroke-width="1.200"/><path d="M3 13h10" stroke="#9dbde6" stroke-dasharray="1 1"/>'],
    ['桩承台', '<path d="M1 2h14v3l-5 2H2z" ' + s + '/><path d="M6 7h4v8H6z" fill="#2e6cc0" stroke="#1f58a8"/>'],
    ['桩', '<path d="M6 1h4v7H6z" fill="#fff" stroke="#1f58a8"/><path d="M3 8h10l-5 7z" fill="#2e6cc0" stroke="#1f58a8"/>'],
    ['砌体加筋', '<path d="M2 2h12v4H2zM4 6v9M12 6v9M4 10h8" fill="none" stroke="#1f58a8" stroke-width="1.200"/>'],
    ['楼梯', '<use href="#stair"/>'],
    ['其它', '<path d="M8 1l2 5 5 .5-4 3.500 1.500 5L8 12.500 3.500 15 5 10 1 6.500 6 6z" fill="#3f83d8"/>']
  ];
  document.getElementById('tree').innerHTML = types.map(function (t, i) {
    var stem = t[0] === '楼梯'
      ? '<svg class="ml-[8px] mr-[6px] w-[8px] h-[10px]"><use href="#chev"/></svg>'
      : '<span class="ml-[12px] w-[10px] h-[16px] border-l border-dotted border-[#888] flex items-center"><span class="w-full border-t border-dotted border-[#888]"></span></span>';
    var label = i === 0
      ? '<span class="flex items-center h-[16px] w-[37px] bg-[#cce4fa]"><svg class="w-4 h-4 shrink-0" viewBox="0 0 16 16">' + t[1] + '</svg><span class="ml-[6px]">' + t[0] + '</span></span>'
      : '<svg class="w-4 h-4 shrink-0" viewBox="0 0 16 16">' + t[1] + '</svg><span class="ml-[6px]">' + t[0] + '</span>';
    return '<div class="h-[16px] flex items-center">' + stem + label + '</div>';
  }).join('');
</script>
</body>
</html>
